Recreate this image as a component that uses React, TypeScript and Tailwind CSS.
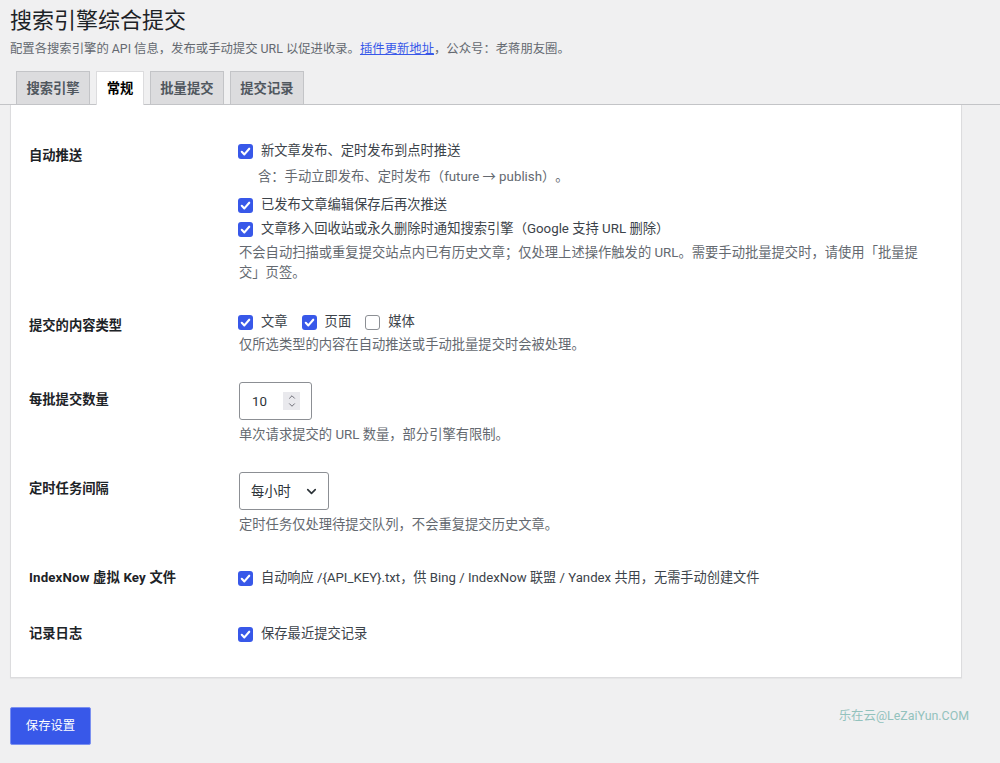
import { ChevronDown, ChevronUp } from "lucide-react"

const font = { fontFamily: 'Roboto, "Noto Sans CJK SC", sans-serif' }

function Check({ on = true }: { on?: boolean }) {
  if (!on) {
    return <span className="block h-[15px] w-[15px] shrink-0 rounded-[3px] border border-[#8c8f94] bg-white" />
  }
  return (
    <span className="flex h-[15px] w-[15px] shrink-0 items-center justify-center rounded-[3px] bg-[#3858e9]">
      <svg viewBox="0 0 16 16" className="h-[13px] w-[13px]" fill="none" stroke="white" strokeWidth="2.6" strokeLinecap="round" strokeLinejoin="round">
        <path d="M3.4 8.4 6.6 11.6 12.6 4.6" />
      </svg>
    </span>
  )
}

function CheckLine({ label, on = true, className = "text-[13.3px]" }: { label: string; on?: boolean; className?: string }) {
  return (
    <label className={"-ml-[1px] flex h-[24px] items-center gap-[8px] text-[#3c434a] " + className}>
      <Check on={on} />
      <span>{label}</span>
    </label>
  )
}

function Row({ label, className, labelClass, children }: { label: string; className: string; labelClass: string; children: React.ReactNode }) {
  return (
    <div className={"flex " + className}>
      <div className={"w-[210px] shrink-0 text-[13.3px] font-bold leading-[24px] text-[#1d2327] " + labelClass}>{label}</div>
      <div className="min-w-0 flex-1">{children}</div>
    </div>
  )
}

function Desc({ children, className = "" }: { children: React.ReactNode; className?: string }) {
  return <p className={"text-[13.3px] leading-[20px] text-[#646970] " + className}>{children}</p>
}

const tabs = ["搜索引擎", "常规", "批量提交", "提交记录"]

export default function App() {
  return (
    <div style={font} className="relative h-[763px] w-[1000px] overflow-hidden bg-[#f0f0f1] [text-spacing-trim:space-all]">
      <div className="pl-[10px] pt-[5px]">
        <h1 className="text-[22px] font-normal leading-[31px] text-[#1d2327]">搜索引擎综合提交</h1>
        <p className="mt-[3px] text-[12.35px] leading-[20px] text-[#646970]">
          配置各搜索引擎的 API 信息，发布或手动提交 URL 以促进收录。
          <a className="text-[#3858e9] underline">插件更新地址</a>
          ，公众号：老蒋朋友圈。
        </p>
      </div>

      <div className="mt-[12px] flex h-[34px] gap-[6px] border-b border-[#c3c4c7] pl-[16px]">
        {tabs.map((t) => (
          <div
            key={t}
            className={
              t === "常规"
                ? "z-10 h-[34px] border border-b-0 border-[#dcdcde] bg-white px-[9.7px] text-[13.3px] font-bold leading-[33px] text-[#000]"
                : "h-[33px] border border-b-0 border-[#c3c4c7] bg-[#dcdcde] px-[9.4px] text-[13.3px] font-bold leading-[33px] text-[#50575e]"
            }
          >
            {t}
          </div>
        ))}
      </div>

      <div className="ml-[10px] h-[573px] w-[952px] border border-t-0 border-[#dcdcde] bg-white pl-[18px] pr-[42px] shadow-[0_1px_1px_rgba(0,0,0,0.04)]">
        <Row label="自动推送" className="pt-[34px]" labelClass="pt-[5px]">
          <CheckLine label="新文章发布、定时发布到点时推送" />
          <Desc className="mt-[4px] pl-[19px]">含：手动立即发布、定时发布（future → publish）。</Desc>
          <div className="mt-[6px]">
            <CheckLine label="已发布文章编辑保存后再次推送" />
          </div>
          <CheckLine label="文章移入回收站或永久删除时通知搜索引擎（Google 支持 URL 删除）" />
          <Desc className="mt-[2px]">不会自动扫描或重复提交站点内已有历史文章；仅处理上述操作触发的 URL。需要手动批量提交时，请使用「批量提交」页签。</Desc>
        </Row>

        <Row label="提交的内容类型" className="pt-[27px]" labelClass="pt-[4px]">
          <div className="flex gap-[15px]">
            <CheckLine label="文章" />
            <CheckLine label="页面" />
            <CheckLine label="媒体" on={false} />
          </div>
          <Desc className="mt-[1px]">仅所选类型的内容在自动推送或手动批量提交时会被处理。</Desc>
        </Row>

        <Row label="每批提交数量" className="pt-[27px]" labelClass="pt-[6px]">
          <div className="flex h-[38px] w-[73px] items-center justify-between rounded-[3px] border border-[#8c8f94] bg-white pl-[12px] pr-[11px] text-[13.3px] text-[#2c3338]">
            <span className="pt-[2px]">10</span>
            <span className="flex h-[18px] w-[17px] flex-col items-center justify-center bg-[#e9e9ed] text-[#55555f]">
              <ChevronUp size={10} strokeWidth={2} className="-mb-[1px]" />
              <ChevronDown size={10} strokeWidth={2} className="-mt-[1px]" />
            </span>
          </div>
          <Desc className="mt-[5px]">单次请求提交的 URL 数量，部分引擎有限制。</Desc>
        </Row>

        <Row label="定时任务间隔" className="pt-[27px]" labelClass="pt-[5px]">
          <div className="flex h-[38px] w-[90px] items-center justify-between rounded-[3px] border border-[#8c8f94] bg-white pl-[11px] pr-[9px] text-[13.3px] text-[#2c3338]">
            <span className="pt-[1px]">每小时</span>
            <ChevronDown size={15} strokeWidth={2.6} className="text-[#2c3338]" />
          </div>
          <Desc className="mt-[5px]">定时任务仅处理待提交队列，不会重复提交历史文章。</Desc>
        </Row>

        <Row label="IndexNow 虚拟 Key 文件" className="pt-[31px]" labelClass="tracking-[0.15px]">
          <CheckLine className="text-[13.2px]" label="自动响应 /{API_KEY}.txt，供 Bing / IndexNow 联盟 / Yandex 共用，无需手动创建文件" />
        </Row>

        <Row label="记录日志" className="pt-[32px]" labelClass="">
          <CheckLine label="保存最近提交记录" />
        </Row>
      </div>

      <div className="flex items-start justify-between pl-[10px] pr-[31px] pt-[29px]">
        <button className="h-[38px] w-[81px] rounded-[2px] border border-[#7b90f0] bg-[#3858e9] text-[12.35px] text-white">保存设置</button>
        <div className="pt-[1px] text-[12.4px] leading-[16px] text-[#93c2bd]">乐在云@LeZaiYun.COM</div>
      </div>
    </div>
  )
}
